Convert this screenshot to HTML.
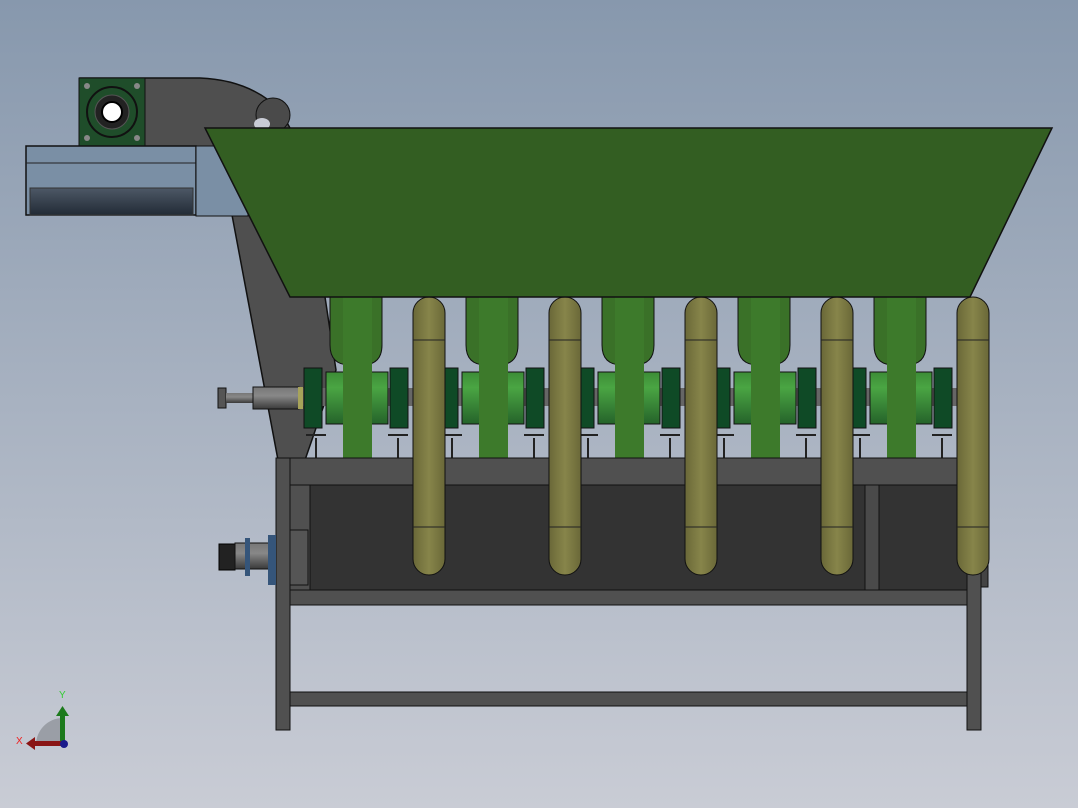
<!DOCTYPE html>
<html><head><style>html,body{margin:0;padding:0;}body{width:1078px;height:808px;overflow:hidden;}svg{display:block}</style></head>
<body>
<svg width="1078" height="808" viewBox="0 0 1078 808" xmlns="http://www.w3.org/2000/svg">
<defs>
<linearGradient id="bg" x1="0" y1="0" x2="0" y2="1"><stop offset="0" stop-color="#8798ad"/><stop offset="1" stop-color="#c9ccd5"/></linearGradient>
<linearGradient id="dk" x1="0" y1="0" x2="0" y2="1"><stop offset="0" stop-color="#4d5866"/><stop offset="1" stop-color="#222b36"/></linearGradient>
<linearGradient id="yl" x1="0" y1="0" x2="1" y2="0"><stop offset="0" stop-color="#6a6838"/><stop offset="0.5" stop-color="#87854a"/><stop offset="1" stop-color="#6a6838"/></linearGradient>
<linearGradient id="sh" x1="0" y1="0" x2="0" y2="1"><stop offset="0" stop-color="#3c8c36"/><stop offset="0.3" stop-color="#4aa543"/><stop offset="1" stop-color="#25632a"/></linearGradient>
<linearGradient id="gr" x1="0" y1="0" x2="0" y2="1"><stop offset="0" stop-color="#777"/><stop offset="0.4" stop-color="#888"/><stop offset="1" stop-color="#3a3a3a"/></linearGradient>
</defs>
<rect width="1078" height="808" fill="url(#bg)"/>
<path d="M80 78 L200 78 Q250 80 280 110 L290 128 L325 297 L336 370 L305 460 L278 460 L232 215 L80 145 Z" fill="#4f4f4f" stroke="#111" stroke-width="1.5"/>
<circle cx="273" cy="115" r="17" fill="#4a4a4a" stroke="#111"/>
<ellipse cx="262" cy="124" rx="8" ry="6" fill="#c9ccd5"/>
<rect x="79" y="78" width="66" height="68" fill="#1f4d2a" stroke="#111"/>
<circle cx="112" cy="112" r="25" fill="#1f4d2a" stroke="#111" stroke-width="2"/>
<circle cx="112" cy="112" r="17" fill="#222" stroke="#555"/>
<circle cx="112" cy="112" r="10" fill="#fff" stroke="#000" stroke-width="2"/>
<circle cx="87" cy="86" r="3" fill="#888"/><circle cx="137" cy="86" r="3" fill="#888"/><circle cx="87" cy="138" r="3" fill="#888"/><circle cx="137" cy="138" r="3" fill="#888"/>
<rect x="26" y="146" width="170" height="69" fill="#7a8fa5" stroke="#111" stroke-width="1.5"/>
<line x1="26" y1="163" x2="196" y2="163" stroke="#222"/>
<rect x="30" y="188" width="163" height="27" fill="url(#dk)" stroke="#333"/>
<rect x="196" y="146" width="52" height="70" fill="#7a8fa5" stroke="#111"/>
<g stroke="#111" stroke-width="1">
<path d="M330 290 V345 Q330 365 350 365 H362 Q382 365 382 345 V290 Z" fill="#3a7128"/>
<path d="M466 290 V345 Q466 365 486 365 H498 Q518 365 518 345 V290 Z" fill="#3a7128"/>
<path d="M602 290 V345 Q602 365 622 365 H634 Q654 365 654 345 V290 Z" fill="#3a7128"/>
<path d="M738 290 V345 Q738 365 758 365 H770 Q790 365 790 345 V290 Z" fill="#3a7128"/>
<path d="M874 290 V345 Q874 365 894 365 H906 Q926 365 926 345 V290 Z" fill="#3a7128"/>
</g>
<rect x="300" y="388" width="660" height="18" fill="#666"/>
<g fill="url(#sh)" stroke="#111">
<rect x="326" y="372" width="62" height="52"/><rect x="462" y="372" width="62" height="52"/><rect x="598" y="372" width="62" height="52"/><rect x="734" y="372" width="62" height="52"/><rect x="870" y="372" width="62" height="52"/>
</g>
<g fill="#0f4a26" stroke="#111">
<rect x="304" y="368" width="18" height="60"/><rect x="390" y="368" width="18" height="60"/><rect x="440" y="368" width="18" height="60"/><rect x="526" y="368" width="18" height="60"/><rect x="576" y="368" width="18" height="60"/><rect x="662" y="368" width="18" height="60"/><rect x="712" y="368" width="18" height="60"/><rect x="798" y="368" width="18" height="60"/><rect x="848" y="368" width="18" height="60"/><rect x="934" y="368" width="18" height="60"/>
</g>
<g stroke="#222" stroke-width="2" fill="none">
<path d="M316 438 V460 M398 438 V460 M452 438 V460 M534 438 V460 M588 438 V460 M670 438 V460 M724 438 V460 M806 438 V460 M860 438 V460 M942 438 V460"/>
<path d="M306 435 H326 M388 435 H408 M442 435 H462 M524 435 H544 M578 435 H598 M660 435 H680 M714 435 H734 M796 435 H816 M850 435 H870 M932 435 H952"/>
</g>
<g fill="#3d7a2b">
<rect x="343" y="297" width="29" height="163"/><rect x="479" y="297" width="29" height="163"/><rect x="615" y="297" width="29" height="163"/><rect x="751" y="297" width="29" height="163"/><rect x="887" y="297" width="29" height="163"/>
</g>
<rect x="218" y="388" width="8" height="20" fill="#555" stroke="#111"/>
<rect x="226" y="393" width="30" height="10" fill="url(#gr)"/>
<rect x="253" y="387" width="46" height="22" fill="url(#gr)" stroke="#111"/>
<rect x="298" y="387" width="5" height="22" fill="#a7a35a"/>
<rect x="276" y="458" width="705" height="27" fill="#505050" stroke="#111"/>
<rect x="290" y="485" width="690" height="105" fill="#333" stroke="#111"/>
<rect x="290" y="485" width="20" height="105" fill="#505050" stroke="#111"/>
<rect x="980" y="485" width="8" height="102" fill="#444" stroke="#111"/>
<rect x="865" y="485" width="14" height="105" fill="#4a4a4a" stroke="#111"/>
<rect x="276" y="590" width="692" height="15" fill="#505050" stroke="#111"/>
<rect x="276" y="458" width="14" height="272" fill="#505050" stroke="#111"/>
<rect x="967" y="458" width="14" height="272" fill="#505050" stroke="#111"/>
<rect x="290" y="692" width="677" height="14" fill="#505050" stroke="#111"/>
<g fill="url(#yl)" stroke="#111">
<rect x="413" y="297" width="32" height="278" rx="16"/><rect x="549" y="297" width="32" height="278" rx="16"/><rect x="685" y="297" width="32" height="278" rx="16"/><rect x="821" y="297" width="32" height="278" rx="16"/><rect x="957" y="297" width="32" height="278" rx="16"/>
</g>
<g stroke="#222"><path d="M413 340H445M549 340H581M685 340H717M821 340H853M957 340H989M413 527H445M549 527H581M685 527H717M821 527H853M957 527H989"/></g>
<rect x="219" y="544" width="16" height="26" fill="#222" stroke="#000"/>
<rect x="235" y="543" width="40" height="26" fill="url(#gr)" stroke="#111"/>
<rect x="245" y="538" width="5" height="38" fill="#35557a"/><rect x="268" y="535" width="8" height="50" fill="#35557a"/>
<rect x="290" y="530" width="18" height="55" fill="#555" stroke="#111"/>
<polygon points="205,128 1052,128 970,297 290,297" fill="#335e22" stroke="#111" stroke-width="1.5"/>
<path d="M36 745 A27 27 0 0 1 63 718 V745 Z" fill="#9a9ea6"/>
<rect x="60" y="714" width="5" height="30" fill="#1c7a1c"/><polygon points="56,716 69,716 62.5,706" fill="#1c7a1c"/>
<rect x="33" y="741" width="30" height="5" fill="#8a1515"/><polygon points="35,737 35,750 26,743.5" fill="#8a1515"/>
<circle cx="64" cy="744" r="4" fill="#1a1a8a"/>
<text x="59" y="698" font-family="Liberation Sans, sans-serif" font-size="10" fill="#3c3">Y</text>
<text x="16" y="744" font-family="Liberation Sans, sans-serif" font-size="10" fill="#e22">X</text>
</svg>
</body></html>
